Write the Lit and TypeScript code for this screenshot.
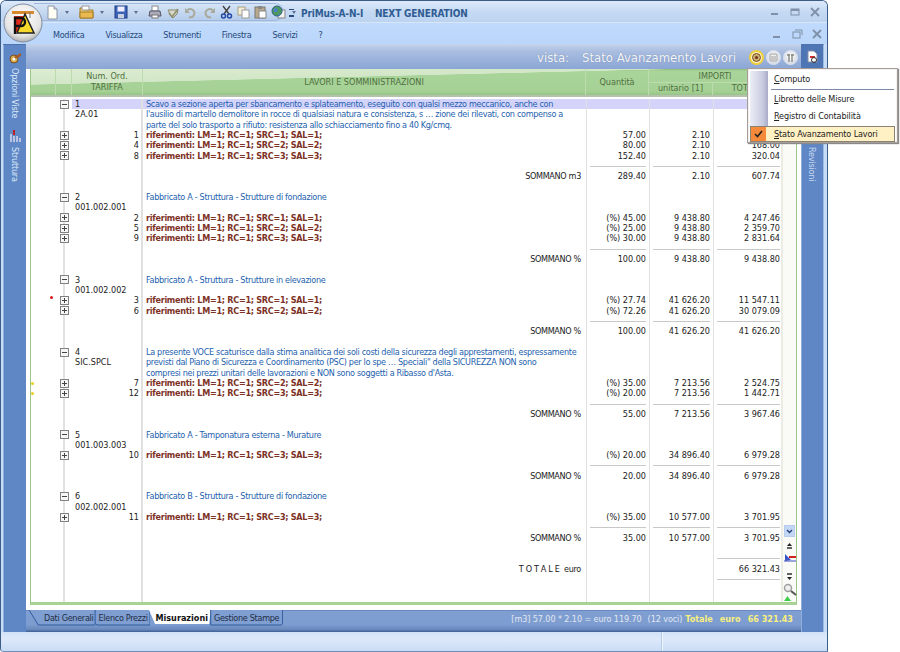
import { LitElement, html, css, svg } from "lit";
import { customElement } from "lit/decorators.js";

type R = { i: number; x?: string; a?: string; b?: string; d?: string; f?: boolean; q?: string; u?: string; t?: string; s?: string; m?: string; sel?: boolean; rule?: boolean; rt?: boolean };

const R3 = (lm: string, rc: string, n: string) => `riferimenti: LM=${lm}; RC=${rc}; SRC=${n}; SAL=${n};`;

const rows: R[] = [
  { i: 0, x: "-", a: "1", d: "Scavo a sezione aperta per sbancamento e splateamento, eseguito con qualsi mezzo meccanico, anche con", sel: true },
  { i: 1, a: "2A.01", d: "l'ausilio di martello demolitore in rocce di qualsiasi natura e consistenza, s … zione dei rilevati, con compenso a" },
  { i: 2, d: "parte del solo trasporto a rifiuto: resistenza allo schiacciamento fino a 40 Kg/cmq." },
  { i: 3, x: "+", b: "1", f: true, d: R3("1", "1", "1"), q: "57.00", u: "2.10", t: "119.70" },
  { i: 4, x: "+", b: "4", f: true, d: R3("1", "1", "2"), q: "80.00", u: "2.10", t: "168.00" },
  { i: 5, x: "+", b: "8", f: true, d: R3("1", "1", "3"), q: "152.40", u: "2.10", t: "320.04" },
  { i: 6, rule: true },
  { i: 7, s: "SOMMANO m3", q: "289.40", u: "2.10", t: "607.74" },
  { i: 9, x: "-", a: "2", d: "Fabbricato A - Struttura - Strutture di fondazione" },
  { i: 10, a: "001.002.001" },
  { i: 11, x: "+", b: "2", f: true, d: R3("1", "1", "1"), q: "(%) 45.00", u: "9 438.80", t: "4 247.46" },
  { i: 12, x: "+", b: "5", f: true, d: R3("1", "1", "2"), q: "(%) 25.00", u: "9 438.80", t: "2 359.70" },
  { i: 13, x: "+", b: "9", f: true, d: R3("1", "1", "3"), q: "(%) 30.00", u: "9 438.80", t: "2 831.64" },
  { i: 14, rule: true },
  { i: 15, s: "SOMMANO %", q: "100.00", u: "9 438.80", t: "9 438.80" },
  { i: 17, x: "-", a: "3", d: "Fabbricato A - Struttura - Strutture in elevazione" },
  { i: 18, a: "001.002.002" },
  { i: 19, x: "+", b: "3", f: true, m: "red", d: R3("1", "1", "1"), q: "(%) 27.74", u: "41 626.20", t: "11 547.11" },
  { i: 20, x: "+", b: "6", f: true, d: R3("1", "1", "2"), q: "(%) 72.26", u: "41 626.20", t: "30 079.09" },
  { i: 21, rule: true },
  { i: 22, s: "SOMMANO %", q: "100.00", u: "41 626.20", t: "41 626.20" },
  { i: 24, x: "-", a: "4", d: "La presente VOCE scaturisce dalla stima analitica dei soli costi della sicurezza degli apprestamenti, espressamente" },
  { i: 25, a: "SIC.SPCL", d: "previsti dal Piano di Sicurezza e Coordinamento (PSC) per lo spe …  Speciali\"  della SICUREZZA NON sono" },
  { i: 26, d: "compresi nei prezzi unitari delle lavorazioni e NON sono soggetti a Ribasso d'Asta." },
  { i: 27, x: "+", b: "7", f: true, m: "yel", d: R3("1", "1", "2"), q: "(%) 35.00", u: "7 213.56", t: "2 524.75" },
  { i: 28, x: "+", b: "12", f: true, m: "yel", d: R3("1", "1", "3"), q: "(%) 20.00", u: "7 213.56", t: "1 442.71" },
  { i: 29, rule: true },
  { i: 30, s: "SOMMANO %", q: "55.00", u: "7 213.56", t: "3 967.46" },
  { i: 32, x: "-", a: "5", d: "Fabbricato A - Tamponatura esterna - Murature" },
  { i: 33, a: "001.003.003" },
  { i: 34, x: "+", b: "10", f: true, d: R3("1", "1", "3"), q: "(%) 20.00", u: "34 896.40", t: "6 979.28" },
  { i: 35, rule: true },
  { i: 36, s: "SOMMANO %", q: "20.00", u: "34 896.40", t: "6 979.28" },
  { i: 38, x: "-", a: "6", d: "Fabbricato B - Struttura - Strutture di fondazione" },
  { i: 39, a: "002.002.001" },
  { i: 40, x: "+", b: "11", f: true, d: R3("1", "1", "3"), q: "(%) 35.00", u: "10 577.00", t: "3 701.95" },
  { i: 41, rule: true },
  { i: 42, s: "SOMMANO %", q: "35.00", u: "10 577.00", t: "3 701.95" },
  { i: 44, rt: true },
  { i: 45, s: "T O T A L E  euro", t: "66 321.43" },
  { i: 46, rt: true },
];

const filled: R[] = [];
for (let n = 0; n <= 46; n++) filled.push(rows.find((r) => r.i === n) ?? { i: n });

const ico = (w: number, h: number, body: unknown) =>
  html`<svg class="ic" width=${w} height=${h} viewBox="0 0 ${w} ${h}">${body}</svg>`;

const qat = [
  ico(13, 15, svg`<path d="M2 1h6l3 3v10H2z" fill="#fffef4" stroke="#8a94a8"/><path d="M8 1v3h3" fill="#dde" stroke="#8a94a8"/>`),
  ico(15, 14, svg`<path d="M1 3h5l1 2h7v8H1z" fill="#f0cc6c" stroke="#a57c2a"/><path d="M3 1h7v4H3z" fill="#fff" stroke="#999"/><path d="M1 7h13v6H1z" fill="#eab94f" stroke="#a57c2a"/>`),
  ico(14, 14, svg`<rect x="1" y="1" width="12" height="12" fill="#3d63b8" stroke="#1c3b80"/><rect x="3.5" y="1.5" width="7" height="5" fill="#eef"/><rect x="4" y="9" width="6" height="4" fill="#c8cfe0"/>`),
];
const qat2 = [
  ico(14, 14, svg`<rect x="4" y="1" width="6" height="5" fill="#fff" stroke="#888"/><path d="M2 6h10l1 5H1z" fill="#aab" stroke="#556"/><rect x="4" y="10" width="6" height="3" fill="#fff" stroke="#777"/>`),
  ico(14, 13, svg`<path d="M2 4h10l-1 4-4 4-3-4z" fill="#d8d8c8" stroke="#8a8a70"/><path d="M3 7l3 4 6-8" fill="none" stroke="#8f8f70" stroke-width="1.6"/>`),
  ico(14, 13, svg`<path d="M3 5a4 4 0 1 1 2 6" fill="none" stroke="#a9a99c" stroke-width="2"/><path d="M1 2v5h5z" fill="#a9a99c"/>`),
  ico(14, 13, svg`<path d="M11 5a4 4 0 1 0-2 6" fill="none" stroke="#a9a99c" stroke-width="2"/><path d="M13 2v5H8z" fill="#a9a99c"/>`),
  ico(13, 14, svg`<path d="M3 1l6 8M10 1L4 9" stroke="#444" stroke-width="1.4"/><circle cx="3.5" cy="11" r="2" fill="none" stroke="#2349a8" stroke-width="1.5"/><circle cx="9.5" cy="11" r="2" fill="none" stroke="#2349a8" stroke-width="1.5"/>`),
  ico(13, 13, svg`<rect x="1" y="1" width="7" height="8" fill="#f4efd8" stroke="#a8a080"/><rect x="5" y="4" width="7" height="8" fill="#fff" stroke="#9a9a9a"/>`),
  ico(13, 14, svg`<rect x="1" y="2" width="10" height="11" fill="#b9a98a" stroke="#777"/><rect x="4" y="1" width="4" height="3" fill="#888"/><rect x="5" y="6" width="7" height="7" fill="#fff" stroke="#888"/>`),
  ico(15, 14, svg`<rect x="7" y="5" width="7" height="8" fill="#f2f2f2" stroke="#888"/><circle cx="6" cy="6" r="5" fill="#4e9a5a" stroke="#2c5f8a"/><path d="M3 3l4 1-1 3-3 0zM7 8l2 1-1 2z" fill="#4a7fd0"/>`),
];

const logo = svg`<svg class="logo" width="40" height="40" viewBox="0 0 40 40">
  <defs><radialGradient id="lg" cx=".5" cy=".35" r=".7"><stop offset="0" stop-color="#ffffff"/><stop offset=".7" stop-color="#e4e4e4"/><stop offset="1" stop-color="#9d9d9d"/></radialGradient></defs>
  <circle cx="20" cy="20" r="19" fill="url(#lg)" stroke="#7f8ba0"/>
  <path d="M9 8h22v3H9z" fill="#d98a2e"/><path d="M27 9v6" stroke="#777"/>
  <rect x="11" y="13" width="13" height="16" fill="#e02b1c"/>
  <path d="M14 30l8-19 9 19z" fill="#f6d92a" stroke="#222" stroke-width="1.5"/>
  <path d="M12 31V15h6a4 4 0 0 1 0 8h-6" fill="none" stroke="#111" stroke-width="2.4"/>
</svg>`;

const roundIc = (body: unknown, cls = "") => html`<span class="round ${cls}">${ico(11, 11, body)}</span>`;
const WB = "#7f90a8";

@customElement("app-root")
export class AppRoot extends LitElement {
  static styles = css`
    :host { display: block; position: relative; width: 900px; height: 652px; background: #fff; overflow: hidden; font-family: "DejaVu Sans Condensed", "DejaVu Sans", "Liberation Sans", sans-serif; font-size: 9px; color: #222; }
    .win { position: relative; width: 828px; height: 652px; box-sizing: border-box; display: flex; flex-direction: column; background: #c6dcf7; border: 1px solid #3c5c88; border-bottom-color: #6f8fb8; border-radius: 6px 6px 0 4px; overflow: hidden; }
    .title { height: 22px; flex: none; display: flex; align-items: center; background: linear-gradient(#dce9f9, #c3d8f3 55%, #bcd3f0); padding-left: 33px; box-shadow: inset 0 -1px 0 #d8e6f8; }
    .pill { display: flex; align-items: center; height: 18px; width: 250px; box-sizing: border-box; padding-left: 12px; border: 1px solid #9db8dc; border-left: 0; border-radius: 0 10px 10px 0; background: linear-gradient(#d6e4f6, #b5cceb); gap: 4px; }
    .ic { display: block; flex: none; }
    .dd { width: 0; height: 0; border: 2px solid transparent; border-top: 3px solid #5a6f90; margin: 2px 6px 0 2px; }
    .qfold { width: 5px; height: 5px; border-top: 1px solid #2a4a7a; border-bottom: 2px solid #2a4a7a; margin: 2px 7px 0 5px; }
    .appname { font-weight: bold; font-size: 10px; color: #2f5c92; white-space: pre; letter-spacing: -.15px; padding-top: 2px; }
    .grow { flex: 1; }
    .wbtn { display: flex; gap: 8px; padding-right: 6px; align-items: center; }
    .menu { height: 21px; flex: none; display: flex; align-items: center; background: linear-gradient(#bfdafc, #bad6fa); padding-left: 52px; gap: 21px; color: #25487a; letter-spacing: -.3px; }
    .menu > span { padding-top: 3px; }
    .wbtn.sub { padding-right: 4px; }
    .body { flex: 1; min-height: 0; display: flex; padding: 0 3px 0 2px; }
    .side { width: 23px; flex: none; background: #5f87c5; display: flex; flex-direction: column; align-items: center; color: #dbe8f8; box-shadow: inset 1px 0 0 #8fb0de; border-top: 1px solid #4e74ad; box-sizing: border-box; }
    .side .vt { writing-mode: vertical-rl; font-size: 9px; line-height: 12px; letter-spacing: -.2px; }
    .sl { padding-top: 6px; }
    .sl .i2 { margin-top: 11px; }
    .sl .vt { margin-top: 4px; }
    .sr { width: 23px; background: #5f87c5; border-right: 1px solid #9cbbe4; }
    .srtop { width: 100%; height: 24px; display: flex; align-items: center; justify-content: center; background: #4f76b4; }
    .sr .vt { margin-top: 78px; color: #c7d8f0; }
    .main { flex: 1; min-width: 0; display: flex; flex-direction: column; background: #fff; }
    .vista { height: 25px; flex: none; display: flex; align-items: center; justify-content: flex-end; box-sizing: border-box; padding: 2px 3px 0 0; background: linear-gradient(#c4d4ec, #a9bde0 30%, #8ba6d5); color: #f4f6fa; font-size: 13px; gap: 13px; white-space: pre; text-shadow: 0 0 1px #6a7fa0; }
    .rounds { display: flex; gap: 2px; }
    .round { width: 15px; height: 15px; box-sizing: border-box; border-radius: 50%; display: flex; align-items: center; justify-content: center; background: radial-gradient(circle at 50% 40%, #fff, #c8cfdc); border: 1px solid #dfe5ee; }
    .round.on { border: 2px solid #f0cf3c; background: #fff4d2; }
    .panel { margin: 0 4px; height: 536px; flex: none; box-sizing: border-box; display: flex; flex-direction: column; border: 1px solid #9cc58a; border-width: 0 1px 3px 1px; border-bottom-color: #a9d295; background: #fff; }
    .head { height: 28px; flex: none; display: grid; grid-template-columns: var(--cols) 1fr; box-sizing: border-box; color: #4f7040; font-size: 9px; border-bottom: 2px solid #b6c2b0; background:
        linear-gradient(178.6deg, #dcecd2 0, #d2e7c7 15.5px, rgba(210,231,199,0) 16px),
        linear-gradient(#8fbd7a 0, #a9d49a 2px, #a6d196 85%, #98c486); }
    .head > div { border-right: 1px solid #bcdcae; display: flex; align-items: center; justify-content: center; text-align: center; line-height: 11px; min-width: 0; }
    .imp { grid-column: span 2; display: flex; flex-direction: column; align-items: stretch !important; }
    .imp > span { height: 13px; line-height: 14px; border-bottom: 1px solid #bcdcae; }
    .imp .two { display: grid; grid-template-columns: 64px 1fr; flex: 1; }
    .imp .two span:first-child { border-right: 1px solid #bcdcae; }
    .tb { flex: 1; min-height: 0; display: flex; padding-top: 2px; --h: 10.33px; }
    .rowsw { flex: 1; min-width: 0; display: flex; flex-direction: column; }
    .r { display: grid; grid-template-columns: var(--cols); height: var(--h); line-height: var(--h); white-space: nowrap; flex: none; }
    .r.fill { flex: 1; height: auto; }
    .c { min-width: 0; position: relative; }
    .dot { position: absolute; width: 3px; height: 3px; border-radius: 50%; top: 4px; }
    .dot.red { background: #d81818; left: 19px; top: 1px; }
    .dot.yel { background: #e8d020; left: 0; }
    .e { display: flex; align-items: center; justify-content: center; }
    .e::before { content: ""; position: absolute; left: 7px; top: 0; bottom: 0; width: 2px; background: #e2e2e2; }
    .box { position: relative; width: 9px; height: 9px; background: #f4f4f4; }
    .n { border-right: 2px solid #e0e0e0; display: flex; justify-content: space-between; padding: 0 2px 0 3px; }
    .sel .n, .sel .d, .sel .cq, .sel .cu, .sel .ct { background: #d4d4fa; }
    .d { color: #1e5fae; padding-left: 3px; letter-spacing: -.32px; }
    .d.rf { color: #7d3226; font-weight: bold; letter-spacing: -.28px; }
    .d.sm { color: #222; text-align: right; padding-right: 5px; white-space: pre; }
    .num { text-align: right; padding-right: 3px; border-left: 1px solid #e0e0e0; }
    .ct { padding-right: 2px; }
    .ln { display: block; height: 1px; background: #c8c8c8; margin: 5px 0 0 3px; }
    .sb { width: 15px; flex: none; box-sizing: border-box; background: #fafaf6; border-left: 2px solid #ecece4; display: flex; flex-direction: column; align-items: center; justify-content: flex-end; gap: 3px; padding-bottom: 1px; }
    .sb .dn { width: 11px; height: 12px; background: #c3d6f3; border: 1px solid #b7cdee; box-sizing: border-box; display: flex; align-items: center; justify-content: center; margin-bottom: 3px; }
    .sb .sp { height: 5px; }
    .sb .tri { margin: -4px 0 0 -5px; }
    .gap5 { height: 5px; flex: none; }
    .tabs { flex: 1; display: flex; align-items: flex-start; justify-content: space-between; background: linear-gradient(#4f74ad 0, #7f9fd2 1px, #7d9ccf 65%, #6a8abd 88%, #3e5f94); padding: 0 8px 0 0; }
    .tl { display: flex; margin-left: 3px; }
    .tab { position: relative; height: 17px; line-height: 17px; color: #222c44; padding: 0 2px 0 15px; white-space: nowrap; margin-right: -1px; letter-spacing: -.3px; }
    .tab svg { position: absolute; left: 0; top: 0; width: 100%; height: 100%; }
    .tab span { position: relative; }
    .tab.t2 { padding: 0 4px; width: 48px; overflow: hidden; }
    .tab.t3 { padding: 0 3px 0 6px; font-weight: bold; color: #111; letter-spacing: 0; }
    .tab.t4 { padding: 0 4px; }
    .stat { display: flex; color: #e2e8f2; padding-top: 3px; line-height: 12px; white-space: pre; letter-spacing: -.1px; }
    .stat b { color: #f8f080; letter-spacing: 0; }
    .stat .m1 { margin-left: 6px; }
    .stat .m2 { margin-left: 3px; }
    .stat .m3 { margin-left: 7px; }
    .foot { height: 19px; flex: none; display: flex; justify-content: flex-end; background: linear-gradient(#d2e2f7, #dde9fa 35%, #c9dcf5); }
    .foot i { width: 165px; border-left: 1px solid #b4cbe8; box-shadow: inset 1px 0 0 #eef5fd; }
    .logo { position: absolute; left: 2px; top: 2px; }
    .popup { position: absolute; left: 747px; top: 68px; width: 151px; height: 75px; box-sizing: border-box; background: #fff; border: 1px solid #a89c98; box-shadow: 1px 1px 1px #8a8a8a, inset 0 0 0 1px #f0f0f0; padding: 2px; font-size: 9px; color: #222; z-index: 3; letter-spacing: -.12px; }
    .popup .strip { position: absolute; left: 2px; top: 2px; width: 18px; bottom: 3px; background: linear-gradient(90deg, #ecedf5, #c9cce0 70%, #a7abc6); }
    .pi { position: relative; height: 17px; line-height: 17px; padding-left: 24px; }
    .psep { position: relative; height: 2px; margin: 0 1px 1px 21px; border-bottom: 1px solid #7c8aa6; box-sizing: border-box; }
    .pi.hov { background: #fff1c4; outline: 1px solid #8a8272; outline-offset: -1px; height: 16px; margin-top: 1px; line-height: 16px; }
    .chk { position: absolute; left: 1px; top: 1px; width: 15px; height: 14px; background: #f58a3a; display: flex; align-items: center; justify-content: center; }
  `;

  private row(r: R) {
    const box = r.x
      ? html`<svg class="box" viewBox="0 0 9 9"><rect x=".5" y=".5" width="8" height="8" fill="#f6f6f6" stroke="#808080"/><path d="M2 4.5h5" stroke="#444"/>${r.x === "+" ? svg`<path d="M4.5 2v5" stroke="#444"/>` : ""}</svg>`
      : "";
    const ln = r.rule || r.rt;
    return html`<div class="r ${r.sel ? "sel" : ""}">
      <div class="c">${r.m ? html`<i class="dot ${r.m}"></i>` : ""}</div>
      <div class="c e">${box}</div>
      <div class="c n"><span>${r.a ?? ""}</span><span>${r.b ?? ""}</span></div>
      <div class="c d ${r.f ? "rf" : ""} ${r.s ? "sm" : ""}">${r.s ?? r.d ?? ""}</div>
      <div class="c num cq">${r.rule ? html`<span class="ln"></span>` : r.q ?? ""}</div>
      <div class="c num cu">${r.rule ? html`<span class="ln"></span>` : r.u ?? ""}</div>
      <div class="c num ct">${ln ? html`<span class="ln"></span>` : r.t ?? ""}</div>
    </div>`;
  }

  render() {
    const cols = "25px 16px 71px 443px 63px 64px 69px";
    return html`<div class="win">
      <div class="title">
        <div class="pill">
          ${qat[0]}<i class="dd"></i>${qat[1]}<i class="dd"></i>${qat[2]}<i class="dd"></i>
          ${qat2}<i class="dd"></i>
        </div>
        <i class="qfold"></i>
        <span class="appname">PriMus-A-N-I    NEXT GENERATION</span>
        <span class="grow"></span>
        <div class="wbtn">
          ${ico(12, 10, svg`<path d="M2 7h7" stroke=${WB} stroke-width="2"/>`)}
          ${ico(12, 10, svg`<rect x="2" y="2" width="8" height="6" fill="none" stroke=${WB}/><path d="M2 3h8" stroke=${WB} stroke-width="2"/>`)}
          ${ico(12, 10, svg`<path d="M2 1l8 8M10 1l-8 8" stroke=${WB} stroke-width="1.8"/>`)}
        </div>
      </div>
      <div class="menu">
        <span>Modifica</span><span>Visualizza</span><span>Strumenti</span><span>Finestra</span><span>Servizi</span><span>?</span>
        <span class="grow"></span>
        <div class="wbtn sub">
          ${ico(12, 10, svg`<path d="M2 8h7" stroke=${WB} stroke-width="2"/>`)}
          ${ico(12, 10, svg`<rect x="2" y="3" width="7" height="6" fill="none" stroke=${WB}/><path d="M4 1h7v5" fill="none" stroke=${WB}/>`)}
          ${ico(12, 10, svg`<path d="M2 1l8 8M10 1l-8 8" stroke=${WB} stroke-width="1.8"/>`)}
        </div>
      </div>
      <div class="body">
        <div class="side sl">
          ${ico(14, 13, svg`<circle cx="6" cy="8" r="4" fill="#d8b050" stroke="#7a4a20"/><path d="M6 6l7-4v3l-6 3z" fill="#a85a20"/><circle cx="6" cy="8" r="1.5" fill="#fff"/>`)}
          <span class="vt">Opzioni Viste</span>
          <span class="i2">${ico(14, 14, svg`<path d="M3 5v8M6 7v6M9 7v6M12 9v4" stroke="#d8d8e8" stroke-width="1.5"/><path d="M6 1v5" stroke="#c02020" stroke-width="2"/>`)}</span>
          <span class="vt">Struttura</span>
        </div>
        <div class="main" style="--cols:${cols}">
          <div class="vista">
            <span>vista:</span><span>Stato Avanzamento Lavori</span>
            <div class="rounds">
              ${roundIc(svg`<circle cx="5.5" cy="5.5" r="4" fill="#c8b070" stroke="#7a5020"/><circle cx="5.5" cy="5.5" r="1.5" fill="#7a3020"/>`, "on")}
              ${roundIc(svg`<rect x="2" y="2" width="7" height="7" rx="1" fill="#f0f0f0" stroke="#a0a0a0"/><path d="M3 5h5M3 7h5" stroke="#a0a0a0"/>`)}
              ${roundIc(svg`<path d="M4 2v8M7 2v8M2 3h3M6 3h3" stroke="#8a8a80" stroke-width="1.4"/>`)}
            </div>
          </div>
          <div class="panel">
            <div class="head">
              <div></div><div></div>
              <div>Num. Ord.<br />TARIFFA</div>
              <div>LAVORI E SOMMINISTRAZIONI</div>
              <div>Quantità</div>
              <div class="imp"><span>IMPORTI</span><div class="two"><span>unitario [1]</span><span>TOTALE</span></div></div>
              <div style="border:0"></div>
            </div>
            <div class="tb">
              <div class="rowsw">
                ${filled.map((r) => this.row(r))}
                <div class="r fill"><div></div><div class="c e"></div><div class="c n"></div><div></div><div class="c num"></div><div class="c num"></div><div class="c num"></div></div>
              </div>
              <div class="sb">
                <div class="dn">${ico(7, 5, svg`<path d="M1 1l2.5 2.5L6 1" fill="none" stroke="#24407c" stroke-width="1.4"/>`)}</div>
                ${ico(7, 7, svg`<path d="M3.5 0L6 3H1z" fill="#222"/><path d="M1 5h5" stroke="#222" stroke-width="1.4"/>`)}
                ${ico(12, 9, svg`<path d="M1 8V1l6 6z" fill="#3c52c8"/><path d="M0 8h12" stroke="#3c52c8"/><path d="M5 4h7" stroke="#d02020" stroke-width="2"/>`)}
                <span class="sp"></span>
                ${ico(7, 7, svg`<path d="M3.5 7L6 4H1z" fill="#222"/><path d="M1 1h5" stroke="#222" stroke-width="1.4"/>`)}
                ${ico(14, 14, svg`<circle cx="5" cy="5" r="3.5" fill="#f0f0f0" stroke="#a0a0a0" stroke-width="1.5"/><path d="M8 8l5 4" stroke="#555" stroke-width="2"/>`)}
                <span class="tri">${ico(7, 5, svg`<path d="M3.5 0L7 5H0z" fill="#3fd04a"/>`)}</span>
              </div>
            </div>
          </div>
          <div class="gap5"></div>
          <div class="tabs">
            <div class="tl">
              <div class="tab"><svg viewBox="0 0 100 17" preserveAspectRatio="none"><path d="M0 0L14 15H100V0" fill="#7f9fd2" stroke="#2f5a9c" vector-effect="non-scaling-stroke"/></svg><span>Dati Generali</span></div>
              <div class="tab t2"><svg viewBox="0 0 100 17" preserveAspectRatio="none"><path d="M2 0V14L6 15H100V0" fill="#7f9fd2" stroke="#2f5a9c" vector-effect="non-scaling-stroke"/></svg><span>Elenco Prezzi</span></div>
              <div class="tab t3"><svg viewBox="0 0 100 17" preserveAspectRatio="none"><path d="M0 0L10 14H98L100 0" fill="#fff"/></svg><span>Misurazioni</span></div>
              <div class="tab t4"><svg viewBox="0 0 100 17" preserveAspectRatio="none"><path d="M1 0V15H97L99 14V0" fill="#7f9fd2" stroke="#2f5a9c" vector-effect="non-scaling-stroke"/></svg><span>Gestione Stampe</span></div>
            </div>
            <div class="stat"><span>[m3] 57.00 * 2.10 = euro 119.70</span><span class="m1">(12 voci)</span><b class="m2">Totale</b><b class="m3">euro</b><b class="m3">66 321.43</b></div>
          </div>
        </div>
        <div class="side sr">
          <div class="srtop">${ico(13, 14, svg`<path d="M2 1h6l3 3v8H2z" fill="#fff" stroke="#8890a8"/><path d="M4 7h5" stroke="#d03030" stroke-width="2"/><circle cx="8" cy="10" r="2.5" fill="none" stroke="#333"/>`)}</div>
          <span class="vt">Revisioni</span>
        </div>
      </div>
      <div class="foot"><i></i></div>
      ${logo}
    </div>
    <div class="popup">
      <div class="strip"></div>
      <div class="pi"><u>C</u>omputo</div>
      <div class="psep"></div>
      <div class="pi"><u>L</u>ibretto delle Misure</div>
      <div class="pi"><u>R</u>egistro di Contabilità</div>
      <div class="pi hov"><span class="chk">${ico(9, 8, svg`<path d="M1 4l2.5 2.5L8 1" fill="none" stroke="#222" stroke-width="1.6"/>`)}</span><u>S</u>tato Avanzamento Lavori</div>
    </div>`;
  }
}
